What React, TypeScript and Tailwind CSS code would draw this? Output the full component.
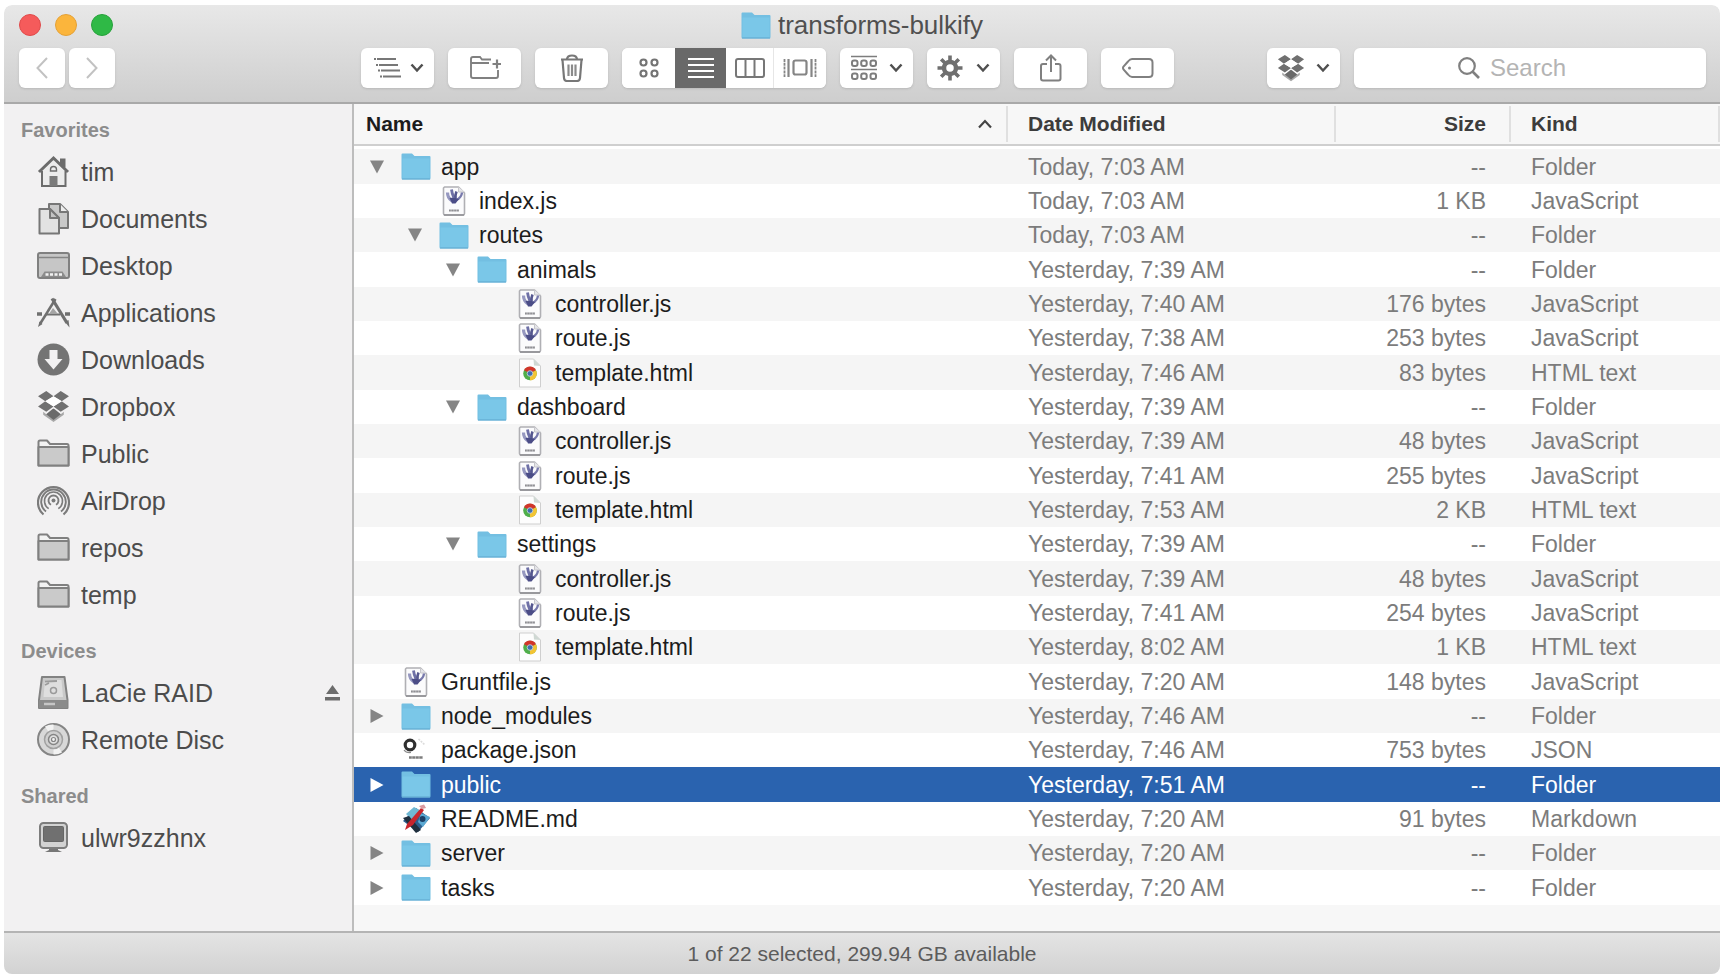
import React from "react";

type IconProps = { className?: string };

function DropboxIcon({ className }: IconProps) {
  return (
    <svg viewBox="0 0 32 32" className={className} fill="#707070" aria-hidden="true">
      <path d="M9 1 L16 6 L8 11 L1 6Z M23 1 L31 6 L24 11 L16 6Z" />
      <path d="M8 11 L16 16 L9 21 L1 16Z M24 11 L31 16 L23 21 L16 16Z" />
      <path d="M8 11 L16 6 L24 11 L16 16Z" fill="#fff" />
      <path d="M6 21 L9 23.500 L15 18.500 L17 18.500 L23 23.500 L26 21 V24 L16 31 L6 24Z" fill="#a8a8a8" />
      <path d="M16 18 L23 23.500 L16 29 L9 23.500Z" fill="#6a6a6a" />
    </svg>
  );
}

function HomeIcon() {
  return (
    <svg viewBox="0 0 33 33" className="size-[33px]" fill="none" stroke="#6c6c6c" strokeWidth="2" aria-hidden="true">
      <path d="M5 16 L16.500 4 L28.500 16 V31 H5Z" fill="#ececec" stroke="none" />
      <path d="M2 17 L16.500 3 L31 17" strokeWidth="3" />
      <path d="M24 9 V4.500 H27.500 V12.500" fill="#6c6c6c" />
      <path d="M5 16 V31 H28.500 V16" />
      <path d="M12.500 31 V21 H20.500 V31Z" fill="#7a7a7a" stroke="none" />
      <path d="M13.500 16 V14.500 A3 3 0 0 1 19.500 14.500 V16Z" strokeWidth="1.400" />
    </svg>
  );
}

function DocumentsIcon() {
  return (
    <svg viewBox="0 0 33 33" className="size-[33px]" fill="#d6d6d6" stroke="#777" strokeWidth="2" strokeLinejoin="round" aria-hidden="true">
      <path d="M12 2 H23 L31 10 V26 H12Z" fill="#c9c9c9" />
      <path d="M23 2 V10 H31" fill="#ededed" />
      <path d="M2.500 7 H13 L22 16 V31.500 H2.500Z" fill="#e2e2e2" />
      <path d="M13 7 V16 H22Z" fill="#c4c4c4" />
    </svg>
  );
}

function DesktopIcon() {
  return (
    <svg viewBox="0 0 33 33" className="size-[33px]" aria-hidden="true">
      <rect x="1" y="4" width="31" height="25" rx="2" fill="#c6c6c6" stroke="#808080" strokeWidth="2" />
      <path d="M2 8.500 H31" stroke="#858585" strokeWidth="1.500" />
      <path d="M4 28 L7.500 22.500 H25.500 L29 28Z" fill="#8c8c8c" />
      <path d="M8.500 25.500 H25" stroke="#f2f2f2" strokeWidth="2.500" strokeDasharray="3 1.500" />
    </svg>
  );
}

function ApplicationsIcon() {
  return (
    <svg viewBox="0 0 33 33" className="size-[33px]" fill="none" stroke="#707070" aria-hidden="true">
      <path d="M18.500 3 L3 28" strokeWidth="2.500" />
      <path d="M2.500 25.500 L1 31 L5.500 28Z" fill="#707070" stroke="none" />
      <path d="M15 2.500 L30 27" strokeWidth="3.200" />
      <path d="M28 26 L32.500 31.500 L31.500 24Z" fill="#707070" stroke="none" />
      <path d="M0 18 H5 M28 18 H33" strokeWidth="3.500" />
      <path d="M9 18.500 H23" strokeWidth="2" />
      <path d="M12 18 H21 L16 12Z" fill="#a5a5a5" stroke="none" />
    </svg>
  );
}

function DownloadsIcon() {
  return (
    <svg viewBox="0 0 33 33" className="size-[33px]" aria-hidden="true">
      <circle cx="16.500" cy="16.500" r="16" fill="#747474" />
      <path d="M12.500 7 H20.500 V16 H25.500 L16.500 26.500 L7.500 16 H12.500Z" fill="#f2f1f2" />
    </svg>
  );
}

function GreyFolderIcon() {
  return (
    <svg viewBox="0 0 33 33" className="size-[33px]" strokeLinejoin="round" aria-hidden="true">
      <path d="M1.500 28.500 V5 Q1.500 3.500 3 3.500 H10 L13 7 H30 Q31.500 7 31.500 8.500 V28.500Z" fill="#f2f2f2" stroke="#808080" strokeWidth="2" />
      <path d="M1.500 10 H31.500 V28.500 H1.500Z" fill="#cacaca" stroke="#808080" strokeWidth="2" />
    </svg>
  );
}

function AirDropIcon() {
  return (
    <svg viewBox="0 0 33 33" className="size-[33px]" fill="none" stroke="#7b7b7b" strokeWidth="1.900" aria-hidden="true">
      <circle cx="16.500" cy="16.500" r="2" fill="#7b7b7b" stroke="none" />
      <path d="M14 20.800 A5 5 0 1 1 19 20.800" />
      <path d="M11.700 24.600 A9 9 0 1 1 21.300 24.600" strokeWidth="1.600" />
      <path d="M9 27.600 A12.300 12.300 0 1 1 24 27.600" />
      <path d="M6.500 30.500 A15.500 15.500 0 1 1 26.500 30.500" strokeWidth="2.200" />
    </svg>
  );
}

function DriveIcon() {
  return (
    <svg viewBox="0 0 33 33" className="size-[33px]" aria-hidden="true">
      <path d="M5 1 H27.500 L30.500 24 V32 H2 V24Z" fill="#c9c9c9" stroke="#828282" strokeWidth="2" strokeLinejoin="round" />
      <path d="M8 4 H24.500 L26 21 H6.500Z" fill="#dedede" />
      <path d="M8 5.500 L20 5 M8 9 L12 7" stroke="#9b9b9b" strokeWidth="1.800" />
      <circle cx="16.500" cy="14.500" r="3" fill="none" stroke="#9a9a9a" strokeWidth="1.500" />
      <path d="M2 24 H30.500 V32 H2Z" fill="#8b8b8b" />
      <path d="M7 28 H18" stroke="#c6c6c6" strokeWidth="2.500" />
    </svg>
  );
}

function DiscIcon() {
  return (
    <svg viewBox="0 0 33 33" className="size-[33px]" fill="none" stroke="#858585" aria-hidden="true">
      <circle cx="16.500" cy="16.500" r="15.500" fill="#d8d8d8" strokeWidth="2" />
      <path d="M16.500 16.500 L8 3.500 A15 15 0 0 1 16.500 1.500Z M16.500 16.500 L25 29.500 A15 15 0 0 1 16.500 31.500Z" fill="#f2f2f2" stroke="none" />
      <circle cx="16.500" cy="16.500" r="9" fill="#cfcfcf" strokeWidth="1.500" stroke="#a0a0a0" />
      <circle cx="16.500" cy="16.500" r="5" fill="#e0e0e0" strokeWidth="1.500" />
      <circle cx="16.500" cy="16.500" r="2" fill="#f3f3f3" strokeWidth="1.200" />
    </svg>
  );
}

function MonitorIcon() {
  return (
    <svg viewBox="0 0 33 33" className="size-[33px]" aria-hidden="true">
      <rect x="3" y="2" width="27" height="25" rx="3.500" fill="#d2d2d2" stroke="#7d7d7d" strokeWidth="2" />
      <rect x="6.500" y="5.500" width="20" height="15" rx="1" fill="#707070" stroke="#666" />
      <path d="M12 28 H21 V29 L25 31 H8 L12 29Z" fill="#777" />
    </svg>
  );
}

function BlueFolder() {
  return (
    <svg viewBox="0 0 30 27" className="h-[27px] w-[30px] shrink-0" aria-hidden="true">
      <path d="M0.500 25 V1.500 Q0.500 0.500 1.500 0.500 H11 L13.500 3 H28.500 Q29.500 3 29.500 4 V25 Q29.500 26.500 28.500 26.500 H1.500 Q0.500 26.500 0.500 25Z" fill="#73bfe2" />
      <path d="M1.500 5.500 H28.500 V25 H1.500Z" fill="#7ac7e8" />
      <path d="M1 26 H29" stroke="#64acd2" />
    </svg>
  );
}

function ScriptFile() {
  return (
    <svg viewBox="0 0 30 30" className="size-[30px] shrink-0" aria-hidden="true">
      <path d="M5.500 1 H19.500 L25.500 7 V27.500 Q25.500 29 24 29 H6 Q4.500 29 4.500 27.500 V2Z" fill="#fbfbfc" stroke="#b0b0b4" strokeWidth="1.600" strokeLinejoin="round" />
      <path d="M19.500 1 V6 H25.500" fill="#e4e4e8" stroke="#c6c6ca" />
      <path d="M5 29 H25" stroke="#8f8f93" strokeWidth="1.600" />
      <path d="M8.500 6.500 Q8.500 12 13 15" fill="none" stroke="#9698c0" strokeWidth="3.200" />
      <path d="M12.500 3.500 Q13 8 15 12" fill="none" stroke="#6e70a6" strokeWidth="2.800" />
      <path d="M17.500 5.500 Q16 9 16.500 13" fill="none" stroke="#55578f" strokeWidth="2.600" />
      <path d="M23 6.500 Q22.500 11.500 17.500 14" fill="none" stroke="#7779ac" strokeWidth="2.400" />
      <path d="M10.500 12 Q14 11 20 13 L16.500 17.500 H13Z" fill="#4b4d87" />
      <path d="M10 24.500 H20" stroke="#b2b2b6" strokeWidth="2.200" />
      <path d="M10 24.500 H20" stroke="#8e8e92" strokeWidth="1.600" strokeDasharray="1.500 1.200" />
    </svg>
  );
}

function HtmlFile() {
  return (
    <svg viewBox="0 0 30 30" className="size-[30px] shrink-0" aria-hidden="true">
      <path d="M4.500 1 H18.500 L25.500 8 V29 H4.500Z" fill="#fdfdfd" stroke="#cfcfcf" strokeLinejoin="round" />
      <path d="M18.500 1 L19 7.500 L25.500 8Z" fill="#cfd8d3" />
      <circle cx="15" cy="15.500" r="6.800" fill="#4fae4a" />
      <path d="M15 15.500 L9 12.200 A6.800 6.800 0 0 1 21 12.200Z" fill="#d2352a" />
      <path d="M15 15.500 L21 12.200 A6.800 6.800 0 0 1 15 22.300Z" fill="#f3c433" />
      <circle cx="15" cy="15.500" r="2.800" fill="#3f6fae" stroke="#c9d6e6" strokeWidth="0.800" />
    </svg>
  );
}

function JsonFile() {
  return (
    <svg viewBox="0 0 30 30" className="size-[30px] shrink-0" aria-hidden="true">
      <circle cx="9" cy="10" r="4.800" fill="#fff" stroke="#2f2f2f" strokeWidth="3.200" />
      <path d="M3 15 Q5 18 10 17.500" fill="none" stroke="#8a8a8a" strokeWidth="1.200" />
      <path d="M17.500 4 L23.500 9.500" stroke="#dcdcdc" strokeWidth="1.600" strokeDasharray="2 1" />
      <path d="M8 22.500 H22" stroke="#b4b4b4" strokeWidth="2.600" />
      <path d="M8 22.500 H22" stroke="#7c7c7c" strokeWidth="2" strokeDasharray="2.500 1" />
    </svg>
  );
}

function MarkdownFile() {
  return (
    <svg viewBox="0 0 30 30" className="size-[30px] shrink-0" aria-hidden="true">
      <path d="M2 17 L15 4 L29 14 L17 28Z" fill="#2d5d8c" />
      <path d="M5 10 L13 3 L22 8 L12 17Z" fill="#6fb7d3" />
      <path d="M20 9 L29 13 L22 23 L17 18Z" fill="#5ba9d3" />
      <circle cx="21.500" cy="15" r="3" fill="#1c3f66" />
      <path d="M2 14 L8 12 L20 26 L15 29Z" fill="#20303f" />
      <path d="M20 4 L23 6 L12 21 L4 26 L6 20Z" fill="#c8252d" />
      <path d="M18 2 L23 0.500 L25 4 L21 5Z" fill="#d99aa0" />
    </svg>
  );
}

function Chevron() {
  return (
    <svg viewBox="0 0 14 10" className="h-[10px] w-[14px] shrink-0" fill="none" stroke="#505050" strokeWidth="2.500" aria-hidden="true">
      <path d="M1.500 1.500 L7 7.500 L12.500 1.500" />
    </svg>
  );
}

function OutlineIcon() {
  return (
    <svg viewBox="0 0 30 22" className="h-[22px] w-[30px]" stroke="#777" strokeWidth="2" aria-hidden="true">
      <path d="M3 2 H5 M6 2 H25 M5 8 H7 M8 8 H27 M7 13.500 H9 M10 13.500 H29 M9 19.500 H11 M12 19.500 H30" />
    </svg>
  );
}

function NewFolderIcon() {
  return (
    <svg viewBox="0 0 32 26" className="h-[26px] w-8" fill="none" stroke="#808080" strokeWidth="1.900" aria-hidden="true">
      <path d="M22 4.500 H13 L11 2 H4 Q2 2 2 4 V21 Q2 23 4 23 H27 Q29 23 29 21 V15" />
      <path d="M2 8 H20" />
      <path d="M28 4.500 V13.500 M23.500 9 H32" strokeWidth="2.200" />
    </svg>
  );
}

function TrashIcon() {
  return (
    <svg viewBox="0 0 24 28" className="h-7 w-6" fill="none" stroke="#777" strokeWidth="2.200" aria-hidden="true">
      <path d="M1 5.500 H23 M7 5 Q7.500 1.500 12 1.500 T17 5" />
      <path d="M2.500 6 L4 24 Q4.300 27 7 27 H17 Q19.700 27 20 24 L21.500 6" />
      <path d="M8.500 10.500 V22 M12 10.500 V22 M15.500 10.500 V22" stroke="#8a8a8a" />
    </svg>
  );
}

function GridIcon() {
  return (
    <svg viewBox="0 0 20 20" className="size-5" fill="none" stroke="#747474" strokeWidth="2.200" aria-hidden="true">
      <circle cx="4.500" cy="4.500" r="3" /><circle cx="15.500" cy="4.500" r="3" />
      <circle cx="4.500" cy="15.500" r="3" /><circle cx="15.500" cy="15.500" r="3" />
    </svg>
  );
}

function ListIcon() {
  return (
    <svg viewBox="0 0 26 20" className="h-5 w-[26px]" stroke="#fff" strokeWidth="2" aria-hidden="true">
      <path d="M0 1 H26 M0 7 H26 M0 13 H26 M0 19 H26" />
    </svg>
  );
}

function ColumnsIcon() {
  return (
    <svg viewBox="0 0 30 20" className="h-5 w-[30px]" fill="none" stroke="#777" strokeWidth="2" aria-hidden="true">
      <rect x="1" y="1" width="28" height="18" rx="2" />
      <path d="M10.500 1 V19 M19.500 1 V19" />
    </svg>
  );
}

function CoverFlowIcon() {
  return (
    <svg viewBox="0 0 34 20" className="h-5 w-[34px]" fill="none" stroke="#858585" strokeWidth="2.200" aria-hidden="true">
      <rect x="10.500" y="2.500" width="13" height="14" rx="2" />
      <path d="M1.500 1 V19 M32.500 1 V19" strokeWidth="1.800" strokeDasharray="3 0.800" />
      <path d="M5.500 1 V19 M28.500 1 V19" />
    </svg>
  );
}

function ArrangeIcon() {
  return (
    <svg viewBox="0 0 28 26" className="h-[26px] w-7" fill="none" stroke="#7d7d7d" strokeWidth="2" aria-hidden="true">
      <path d="M1 1.500 H27 M1 14.500 H27" strokeWidth="1.600" />
      <rect x="2" y="5.500" width="5.500" height="5.500" rx="2" /><rect x="11.200" y="5.500" width="5.500" height="5.500" rx="2" /><rect x="20.500" y="5.500" width="5.500" height="5.500" rx="2" />
      <rect x="2" y="18.500" width="5.500" height="5.500" rx="2" /><rect x="11.200" y="18.500" width="5.500" height="5.500" rx="2" /><rect x="20.500" y="18.500" width="5.500" height="5.500" rx="2" />
    </svg>
  );
}

function GearIcon() {
  return (
    <svg viewBox="0 0 26 26" className="size-[26px]" fill="none" stroke="#6f6f6f" aria-hidden="true">
      <circle cx="13" cy="13" r="6" strokeWidth="4.500" />
      <path d="M13 0.500 V6 M13 20 V25.500 M0.500 13 H6 M20 13 H25.500 M4.200 4.200 L8 8 M18 18 L21.800 21.800 M4.200 21.800 L8 18 M18 8 L21.800 4.200" strokeWidth="3.600" />
    </svg>
  );
}

function ShareIcon() {
  return (
    <svg viewBox="0 0 24 28" className="h-7 w-6" fill="none" stroke="#808080" strokeWidth="2" aria-hidden="true">
      <path d="M8 10 H4 Q2 10 2 12 V24.500 Q2 26.500 4 26.500 H19.500 Q21.500 26.500 21.500 24.500 V12 Q21.500 10 19.500 10 H16" />
      <path d="M12 18 V2 M7 6.500 L12 1.500 L17 6.500" />
    </svg>
  );
}

function TagIcon() {
  return (
    <svg viewBox="0 0 32 20" className="h-5 w-8" fill="none" stroke="#808080" strokeWidth="2" aria-hidden="true">
      <path d="M10 1 H27 Q30.500 1 30.500 4.500 V15.500 Q30.500 19 27 19 H10 Q8 19 6 16.500 L1.500 11.500 Q0.500 10 1.500 8.500 L6 3.500 Q8 1 10 1Z" />
      <circle cx="7.500" cy="10" r="1.500" fill="#808080" stroke="none" />
    </svg>
  );
}

type Glyph = () => React.JSX.Element;
type Place = { label: string; icon: Glyph; ejectable?: boolean };

const SECTIONS: { title: string; places: Place[] }[] = [
  {
    title: "Favorites",
    places: [
      { label: "tim", icon: HomeIcon },
      { label: "Documents", icon: DocumentsIcon },
      { label: "Desktop", icon: DesktopIcon },
      { label: "Applications", icon: ApplicationsIcon },
      { label: "Downloads", icon: DownloadsIcon },
      { label: "Dropbox", icon: () => <DropboxIcon className="size-[33px]" /> },
      { label: "Public", icon: GreyFolderIcon },
      { label: "AirDrop", icon: AirDropIcon },
      { label: "repos", icon: GreyFolderIcon },
      { label: "temp", icon: GreyFolderIcon },
    ],
  },
  {
    title: "Devices",
    places: [
      { label: "LaCie RAID", icon: DriveIcon, ejectable: true },
      { label: "Remote Disc", icon: DiscIcon },
    ],
  },
  { title: "Shared", places: [{ label: "ulwr9zzhnx", icon: MonitorIcon }] },
];

type Entry = {
  name: string;
  depth: 0 | 1 | 2 | 3;
  date: string;
  size: string;
  kind: "Folder" | "JavaScript" | "HTML text" | "JSON" | "Markdown";
  open?: boolean;
  selected?: boolean;
};

const ENTRIES: Entry[] = [
  { name: "app", depth: 0, date: "Today, 7:03 AM", size: "--", kind: "Folder", open: true },
  { name: "index.js", depth: 1, date: "Today, 7:03 AM", size: "1 KB", kind: "JavaScript" },
  { name: "routes", depth: 1, date: "Today, 7:03 AM", size: "--", kind: "Folder", open: true },
  { name: "animals", depth: 2, date: "Yesterday, 7:39 AM", size: "--", kind: "Folder", open: true },
  { name: "controller.js", depth: 3, date: "Yesterday, 7:40 AM", size: "176 bytes", kind: "JavaScript" },
  { name: "route.js", depth: 3, date: "Yesterday, 7:38 AM", size: "253 bytes", kind: "JavaScript" },
  { name: "template.html", depth: 3, date: "Yesterday, 7:46 AM", size: "83 bytes", kind: "HTML text" },
  { name: "dashboard", depth: 2, date: "Yesterday, 7:39 AM", size: "--", kind: "Folder", open: true },
  { name: "controller.js", depth: 3, date: "Yesterday, 7:39 AM", size: "48 bytes", kind: "JavaScript" },
  { name: "route.js", depth: 3, date: "Yesterday, 7:41 AM", size: "255 bytes", kind: "JavaScript" },
  { name: "template.html", depth: 3, date: "Yesterday, 7:53 AM", size: "2 KB", kind: "HTML text" },
  { name: "settings", depth: 2, date: "Yesterday, 7:39 AM", size: "--", kind: "Folder", open: true },
  { name: "controller.js", depth: 3, date: "Yesterday, 7:39 AM", size: "48 bytes", kind: "JavaScript" },
  { name: "route.js", depth: 3, date: "Yesterday, 7:41 AM", size: "254 bytes", kind: "JavaScript" },
  { name: "template.html", depth: 3, date: "Yesterday, 8:02 AM", size: "1 KB", kind: "HTML text" },
  { name: "Gruntfile.js", depth: 0, date: "Yesterday, 7:20 AM", size: "148 bytes", kind: "JavaScript" },
  { name: "node_modules", depth: 0, date: "Yesterday, 7:46 AM", size: "--", kind: "Folder" },
  { name: "package.json", depth: 0, date: "Yesterday, 7:46 AM", size: "753 bytes", kind: "JSON" },
  { name: "public", depth: 0, date: "Yesterday, 7:51 AM", size: "--", kind: "Folder", selected: true },
  { name: "README.md", depth: 0, date: "Yesterday, 7:20 AM", size: "91 bytes", kind: "Markdown" },
  { name: "server", depth: 0, date: "Yesterday, 7:20 AM", size: "--", kind: "Folder" },
  { name: "tasks", depth: 0, date: "Yesterday, 7:20 AM", size: "--", kind: "Folder" },
];

const KIND_ICONS: Record<Entry["kind"], Glyph> = {
  Folder: BlueFolder,
  JavaScript: ScriptFile,
  "HTML text": HtmlFile,
  JSON: JsonFile,
  Markdown: MarkdownFile,
};

const INDENTS = ["pl-4", "pl-[54px]", "pl-[92px]", "pl-[130px]"];

function Disclosure({ open, selected, name }: { open?: boolean; selected?: boolean; name: string }) {
  return (
    <button type="button" aria-label={name} aria-expanded={!!open} className="flex w-[14px] shrink-0 items-center justify-center">
      <svg viewBox="0 0 14 14" className="size-[14px]" fill={selected ? "#fff" : "#858585"} aria-hidden="true">
        <path d={open ? "M0 0.500 H14 L7 13.500Z" : "M0.500 0 V14 L13.500 7Z"} />
      </svg>
    </button>
  );
}

function EntryRow({ entry }: { entry: Entry }) {
  const Icon = KIND_ICONS[entry.kind];
  const rowTone = entry.selected
    ? "bg-[#2a63af] text-white"
    : "odd:bg-[#f5f5f5] even:bg-white text-[#7c7c7c]";
  return (
    <tr aria-selected={!!entry.selected} className={`h-[34px] nth-[3n+1]:h-[35px] ${rowTone}`}>
      <td className={`p-0 ${INDENTS[entry.depth]}`}>
        <div className={`flex items-center ${entry.selected ? "text-white" : "text-[#1c1c1c]"}`}>
          {entry.kind === "Folder" ? (
            <Disclosure open={entry.open} selected={entry.selected} name={entry.name} />
          ) : (
            <span className="w-[14px] shrink-0" />
          )}
          <span className="ml-[17px] mr-[10px] flex w-[30px] shrink-0 justify-center">
            <Icon />
          </span>
          <span className="truncate">{entry.name}</span>
        </div>
      </td>
      <td className="truncate p-0 pl-5">{entry.date}</td>
      <td className="truncate p-0 pr-[25px] text-right">{entry.size}</td>
      <td className="truncate p-0 pl-5">{entry.kind}</td>
    </tr>
  );
}

const SEGMENT = "flex h-10 items-center justify-center bg-white";
const SINGLE = "flex h-10 w-[73px] items-center justify-center rounded-md bg-white shadow-sm";
const MENU = "flex h-10 w-[73px] items-center justify-between rounded-md bg-white px-[10px] shadow-sm";

function Toolbar() {
  return (
    <header className="shrink-0 rounded-t-lg border-b-2 border-[#a9a9a9] bg-linear-to-b from-[#e8e8e8] to-[#cecece] pb-[14px]">
      <div className="grid h-10 grid-cols-[1fr_auto_1fr] items-center px-[15px]">
        <div className="flex gap-[14px]">
          <button type="button" aria-label="Close" className="size-[22px] rounded-full border border-[#e04a4a] bg-[#f55b5b]" />
          <button type="button" aria-label="Minimize" className="size-[22px] rounded-full border border-[#e5a136] bg-[#fbb53c]" />
          <button type="button" aria-label="Zoom" className="size-[22px] rounded-full border border-[#27a23b] bg-[#2fb946]" />
        </div>
        <h1 className="flex items-center gap-[7px] text-[26px] leading-8 text-[#505050]">
          <BlueFolder />
          transforms-bulkify
        </h1>
      </div>
      <div className="flex items-center gap-[14px] pl-[15px] pr-[14px] pt-[3px]">
        <nav aria-label="History" className="flex w-[328px] gap-1">
          <button type="button" aria-label="Back" className="flex h-10 w-[46px] items-center justify-center rounded-md bg-white shadow-sm">
            <svg viewBox="0 0 12 22" className="h-[22px] w-3" fill="none" stroke="#c2c2c2" strokeWidth="2" aria-hidden="true"><path d="M11 1 L1.500 11 L11 21" /></svg>
          </button>
          <button type="button" aria-label="Forward" className="flex h-10 w-[46px] items-center justify-center rounded-md bg-white shadow-sm">
            <svg viewBox="0 0 12 22" className="h-[22px] w-3" fill="none" stroke="#c2c2c2" strokeWidth="2" aria-hidden="true"><path d="M1 1 L10.500 11 L1 21" /></svg>
          </button>
        </nav>
        <button type="button" aria-label="Outline" className={MENU}><OutlineIcon /><Chevron /></button>
        <button type="button" aria-label="New folder" className={SINGLE}><NewFolderIcon /></button>
        <button type="button" aria-label="Move to trash" className={SINGLE}><TrashIcon /></button>
        <div role="group" aria-label="View" className="flex overflow-hidden rounded-md bg-white shadow-sm">
          <button type="button" aria-label="Icons" className={`${SEGMENT} w-[53px]`}><GridIcon /></button>
          <button type="button" aria-label="List" aria-pressed="true" className="flex h-10 w-[51px] items-center justify-center bg-[#696969]"><ListIcon /></button>
          <button type="button" aria-label="Columns" className={`${SEGMENT} w-12 border-r border-[#e6e6e6]`}><ColumnsIcon /></button>
          <button type="button" aria-label="Cover flow" className={`${SEGMENT} w-[52px]`}><CoverFlowIcon /></button>
        </div>
        <button type="button" aria-label="Arrange" className={MENU}><ArrangeIcon /><Chevron /></button>
        <button type="button" aria-label="Action" className={MENU}><GearIcon /><Chevron /></button>
        <button type="button" aria-label="Share" className={SINGLE}><ShareIcon /></button>
        <button type="button" aria-label="Tags" className={SINGLE}><TagIcon /></button>
        <button type="button" aria-label="Dropbox" className={`${MENU} ml-auto`}><DropboxIcon className="size-7" /><Chevron /></button>
        <label className="flex h-10 w-[352px] items-center justify-center gap-[10px] rounded-md bg-white shadow-sm">
          <svg viewBox="0 0 22 22" className="size-[22px] shrink-0" fill="none" stroke="#808080" strokeWidth="2.200" aria-hidden="true">
            <circle cx="9" cy="9" r="7.800" /><path d="M14.500 14.500 L21 21" strokeWidth="2.600" />
          </svg>
          <input type="text" aria-label="Search" placeholder="Search" className="w-28 bg-transparent text-2xl leading-8 outline-none placeholder:text-[#b4b4b4]" />
        </label>
      </div>
    </header>
  );
}

function Sidebar() {
  return (
    <aside className="flex w-[350px] shrink-0 flex-col gap-[15px] border-r-2 border-[#bdbdbd] bg-[#f2f1f2] pt-2">
      {SECTIONS.map((section) => (
        <section key={section.title}>
          <h2 className="flex h-9 items-center pl-[17px] text-xl font-bold text-[#8c8c8c]">{section.title}</h2>
          <ul>
            {section.places.map((place) => (
              <li key={place.label} className="flex h-[47px] items-center pl-[33px] pr-3">
                <a href="#" className="flex items-center gap-[11px] text-[25px] leading-8 text-[#4c4c4c]">
                  <place.icon />
                  {place.label}
                </a>
                {place.ejectable && (
                  <button type="button" aria-label="Eject" className="ml-auto">
                    <svg viewBox="0 0 15 16" className="h-4 w-[15px]" fill="#6c6c6c" aria-hidden="true"><path d="M7.500 0 L14 9 H1Z M0 12 H15 V15.500 H0Z" /></svg>
                  </button>
                )}
              </li>
            ))}
          </ul>
        </section>
      ))}
    </aside>
  );
}

function FileList() {
  return (
    <main className="flex min-w-0 flex-1 flex-col bg-white">
      <table className="w-full table-fixed border-separate border-spacing-0 text-[23px] leading-7">
        <colgroup>
          <col />
          <col className="w-[328px]" />
          <col className="w-[175px]" />
          <col className="w-[209px]" />
        </colgroup>
        <thead className="bg-[#f7f7f7] text-left text-[21px] text-[#3c3c3c]">
          <tr className="h-[42px]">
            <th scope="col" aria-sort="ascending" className="border-b-2 border-[#cfcfcf] p-0 pl-3 text-[#1c1c1c]">
              <div className="flex h-9 items-center justify-between border-r-2 border-[#e0e0e0] pr-[14px]">
                Name
                <svg viewBox="0 0 14 10" className="h-[10px] w-[14px]" fill="none" stroke="#444" strokeWidth="2.200" aria-hidden="true"><path d="M1 8.500 L7 2 L13 8.500" /></svg>
              </div>
            </th>
            <th scope="col" className="border-b-2 border-[#cfcfcf] p-0">
              <div className="flex h-9 items-center border-r-2 border-[#e0e0e0] pl-5">Date Modified</div>
            </th>
            <th scope="col" className="border-b-2 border-[#cfcfcf] p-0">
              <div className="flex h-9 items-center justify-end border-r-2 border-[#e0e0e0] pr-[23px]">Size</div>
            </th>
            <th scope="col" className="border-b-2 border-[#cfcfcf] p-0">
              <div className="flex h-9 items-center border-r-2 border-[#e0e0e0] pl-5">Kind</div>
            </th>
          </tr>
          <tr aria-hidden="true" className="h-[3px]"><td colSpan={4} className="bg-white p-0" /></tr>
        </thead>
        <tbody>
          {ENTRIES.map((entry, i) => (
            <EntryRow key={i} entry={entry} />
          ))}
        </tbody>
      </table>
      <div className="flex-1 bg-[#f7f7f7]" />
    </main>
  );
}

export default function App() {
  return (
    <div className="flex min-h-screen flex-col bg-white p-[5px] pl-1 font-['Liberation_Sans',Arial,sans-serif]">
      <div className="flex flex-1 flex-col overflow-hidden rounded-lg">
        <Toolbar />
        <div className="flex flex-1">
          <Sidebar />
          <FileList />
        </div>
        <footer className="flex h-[43px] shrink-0 items-center justify-center border-t-2 border-[#b4b4b4] bg-linear-to-b from-[#e4e4e4] to-[#d2d2d2] text-[21px] text-[#5c5c5c]">
          1 of 22 selected, 299.94 GB available
        </footer>
      </div>
    </div>
  );
}
